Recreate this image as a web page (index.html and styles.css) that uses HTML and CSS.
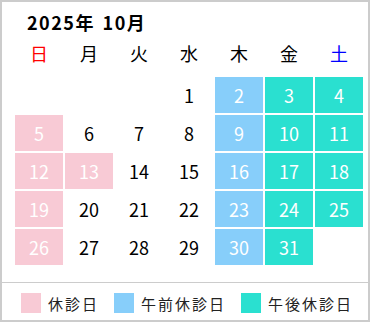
FILE: index.html
```html
<!DOCTYPE html>
<html lang="ja">
<head>
<meta charset="utf-8">
<link rel="stylesheet" href="styles.css">
</head>
<body>
<div class="card">
  <div class="main">
    <div class="title">2025年 10月</div>
    <div class="weekdays">
      <div class="wd sun">日</div>
      <div class="wd">月</div>
      <div class="wd">火</div>
      <div class="wd">水</div>
      <div class="wd">木</div>
      <div class="wd">金</div>
      <div class="wd sat">土</div>
    </div>
    <div class="dates">
      <div class="d"></div>
      <div class="d"></div>
      <div class="d"></div>
      <div class="d">1</div>
      <div class="d am">2</div>
      <div class="d pm">3</div>
      <div class="d pm">4</div>

      <div class="d off">5</div>
      <div class="d">6</div>
      <div class="d">7</div>
      <div class="d">8</div>
      <div class="d am">9</div>
      <div class="d pm">10</div>
      <div class="d pm">11</div>

      <div class="d off">12</div>
      <div class="d off">13</div>
      <div class="d">14</div>
      <div class="d">15</div>
      <div class="d am">16</div>
      <div class="d pm">17</div>
      <div class="d pm">18</div>

      <div class="d off">19</div>
      <div class="d">20</div>
      <div class="d">21</div>
      <div class="d">22</div>
      <div class="d am">23</div>
      <div class="d pm">24</div>
      <div class="d pm">25</div>

      <div class="d off">26</div>
      <div class="d">27</div>
      <div class="d">28</div>
      <div class="d">29</div>
      <div class="d am">30</div>
      <div class="d pm">31</div>
      <div class="d"></div>
    </div>
  </div>
  <div class="legend">
    <div class="item"><span class="sw off"></span><span class="lbl">休診日</span></div>
    <div class="item"><span class="sw am"></span><span class="lbl">午前休診日</span></div>
    <div class="item"><span class="sw pm"></span><span class="lbl">午後休診日</span></div>
  </div>
</div>
</body>
</html>
```

FILE: styles.css
```css
* { box-sizing: border-box; }
html, body { margin: 0; padding: 0; background: #fff; }
body {
  font-family: "Noto Sans CJK JP", "Noto Sans", sans-serif;
  color: #000;
}
.card {
  width: 370px;
  height: 322px;
  border: 2px solid #cccccc;
  display: flex;
  flex-direction: column;
}
.main {
  padding: 8px 0 17px 13px;
  border-bottom: 1px solid #cccccc;
}
.title {
  padding-left: 12px;
  font-size: 18px;
  font-weight: bold;
  line-height: 24px;
  height: 24px;
  letter-spacing: 1.5px;
  word-spacing: 2px;
}
.weekdays {
  margin-top: 7px;
  display: grid;
  grid-template-columns: repeat(7, 48px);
  column-gap: 2px;
}
.wd {
  text-align: center;
  font-size: 18px;
  line-height: 24px;
  height: 24px;
}
.sun { color: #ff0000; }
.sat { color: #0000ff; }
.dates {
  margin-top: 12px;
  display: grid;
  grid-template-columns: repeat(7, 48px);
  grid-auto-rows: 36px;
  gap: 2px;
}
.d {
  display: flex;
  align-items: center;
  justify-content: center;
  font-size: 18px;
}
.d.off, .d.am, .d.pm { color: #fff; }
.off { background: #f8cad5; }
.am { background: #87cefa; }
.pm { background: #2ae0d0; }
.legend {
  flex: 1;
  display: flex;
  align-items: center;
  padding: 3px 0 0 19px;
}
.item {
  display: flex;
  align-items: center;
  margin-right: 15px;
}
.sw {
  width: 20px;
  height: 20px;
  margin-right: 7px;
}
.lbl {
  font-size: 15px;
  letter-spacing: 2px;
  color: #222;
}
```
